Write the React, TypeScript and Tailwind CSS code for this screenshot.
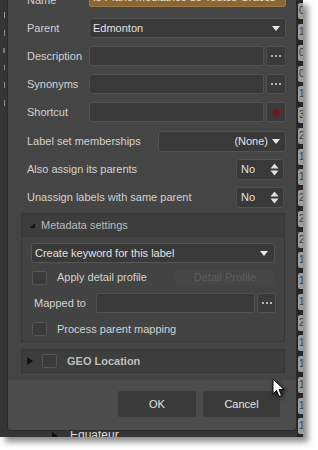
import React from "react";

const font = { fontFamily: '"Liberation Sans", Arial, sans-serif' };

const counts = [0, 1, 0, 0, 1, 3, 2, 1, 1, 2, 2, 2, 1, 1, 1, 2, 1, 1, 1, 1, 1];

const DownArrow = () => (
  <svg width="8" height="5" viewBox="0 0 8 5">
    <path d="M0 0 H8 L4 5 Z" fill="#e8e8e8" />
  </svg>
);

const Spin = () => (
  <svg width="9" height="13" viewBox="0 0 9 13">
    <path d="M0.5 5.5 L4.5 0.5 L8.5 5.5 Z" fill="#e0e0e0" />
    <path d="M0.5 7.5 H8.5 L4.5 12.5 Z" fill="#e0e0e0" />
  </svg>
);

const Dots = () => (
  <span className="flex gap-[2px]">
    <span className="w-[2px] h-[2px] bg-[#b5b5b5]" />
    <span className="w-[2px] h-[2px] bg-[#b5b5b5]" />
    <span className="w-[2px] h-[2px] bg-[#b5b5b5]" />
  </span>
);

const Field = ({ label, children }: { label: string; children: React.ReactNode }) => (
  <div className="flex items-center h-[20px]">
    <span className="w-[62px] shrink-0 text-[11px] text-[#d2d2d2]">{label}</span>
    <div className="flex-1 flex h-full">{children}</div>
  </div>
);

const Box = () => (
  <div className="flex-1 h-full bg-[#393939] border border-[#515151] rounded-[2px]" />
);

const SideButton = ({ children }: { children: React.ReactNode }) => (
  <div className="w-[20px] ml-[2px] h-full bg-[#3a3a3a] border border-[#515151] rounded-[2px] flex items-center justify-center">
    {children}
  </div>
);

const Check = () => (
  <div className="w-[15px] h-[14px] bg-[#3b3b3b] border border-[#545454] rounded-[2px] shrink-0" />
);

const Dialog = () => (
  <div className="h-[431px] bg-[#454545] border-l border-r border-b border-[#2b2b2b] rounded-b-[4px] overflow-hidden flex flex-col">
    <div className="pl-[19px] pr-[10px] flex flex-col">
      <div className="flex items-end h-[20px] mt-[-13px]">
        <span className="w-[62px] shrink-0 text-[11px] text-[#d2d2d2] leading-[14px]">Name</span>
        <div className="flex-1 h-full bg-[#8a6634] border border-[#a07a44] rounded-[2px] overflow-hidden whitespace-nowrap text-[11px] text-[#f0e6d6] pl-[3px] leading-[18px]">
          Is Plane Médiatrice de Toutes Grâces
        </div>
      </div>
      <div className="mt-[11px] flex flex-col gap-[8px]">
        <Field label="Parent">
          <div className="flex-1 h-full bg-[#393939] border border-[#515151] rounded-[2px] flex items-center justify-between pl-[3px] pr-[5px]">
            <span className="text-[11px] text-[#e2e2e2]">Edmonton</span>
            <DownArrow />
          </div>
        </Field>
        <Field label="Description">
          <Box />
          <SideButton>
            <Dots />
          </SideButton>
        </Field>
        <Field label="Synonyms">
          <Box />
          <SideButton>
            <Dots />
          </SideButton>
        </Field>
        <Field label="Shortcut">
          <Box />
          <SideButton>
            <span className="w-[7px] h-[7px] rounded-full bg-[#6e1a1a] shadow-[0_0_3px_#7a2020]" />
          </SideButton>
        </Field>
      </div>
      <div className="mt-[9px] flex items-center h-[21px]">
        <span className="flex-1 text-[11px] text-[#d2d2d2]">Label set memberships</span>
        <div className="w-[128px] h-full bg-[#393939] border border-[#515151] rounded-[3px] flex items-center justify-end gap-[4px] pr-[5px]">
          <span className="text-[11px] text-[#e2e2e2]">(None)</span>
          <DownArrow />
        </div>
      </div>
      <div className="mt-[7px] flex items-center h-[21px]">
        <span className="flex-1 text-[11px] text-[#d2d2d2]">Also assign its parents</span>
        <div className="w-[48px] mr-[2px] h-full bg-[#393939] border border-[#515151] rounded-[3px] flex items-center justify-between pl-[4px] pr-[4px]">
          <span className="text-[11px] text-[#e2e2e2]">No</span>
          <Spin />
        </div>
      </div>
      <div className="mt-[7px] flex items-center h-[21px]">
        <span className="flex-1 text-[11px] text-[#d2d2d2]">Unassign labels with same parent</span>
        <div className="w-[48px] mr-[2px] h-full bg-[#393939] border border-[#515151] rounded-[3px] flex items-center justify-between pl-[4px] pr-[4px]">
          <span className="text-[11px] text-[#e2e2e2]">No</span>
          <Spin />
        </div>
      </div>
    </div>

    <div className="ml-[13px] mr-[11px] mt-[5px] h-[129px] border border-[#373737] bg-[#434343] flex flex-col">
      <div className="h-[23px] bg-[#3d3d3d] border-b border-[#383838] flex items-center pl-[8px] gap-[6px]">
        <svg width="5" height="5" viewBox="0 0 5 5">
          <path d="M5 0 V5 H0 Z" fill="#111" />
        </svg>
        <span className="text-[11px] text-[#bcbcbc]">Metadata settings</span>
      </div>
      <div className="pl-[9px] pr-[9px] flex flex-col">
        <div className="mt-[6px] h-[20px] bg-[#393939] border border-[#555] rounded-[3px] flex items-center justify-between pl-[3px] pr-[6px]">
          <span className="text-[11px] text-[#e2e2e2]">Create keyword for this label</span>
          <DownArrow />
        </div>
        <div className="mt-[6px] h-[17px] flex items-center">
          <div className="ml-[1px]">
            <Check />
          </div>
          <span className="ml-[10px] flex-1 text-[11px] text-[#d2d2d2]">Apply detail profile</span>
          <div className="w-[100px] h-[15px] bg-[#464646] rounded-[2px] flex items-center justify-center text-[11px] text-[#5c5c5c]">
            Detail Profile
          </div>
        </div>
        <div className="mt-[7px] h-[20px] flex items-center">
          <span className="ml-[3px] w-[62px] text-[11px] text-[#d2d2d2]">Mapped to</span>
          <div className="flex-1 h-full bg-[#393939] border border-[#515151] rounded-[2px]" />
          <div className="w-[19px] ml-[2px] mr-[-1px] h-full bg-[#3a3a3a] border border-[#515151] rounded-[2px] flex items-center justify-center">
            <Dots />
          </div>
        </div>
        <div className="mt-[9px] h-[14px] flex items-center">
          <div className="ml-[1px]">
            <Check />
          </div>
          <span className="ml-[10px] text-[11px] text-[#d2d2d2]">Process parent mapping</span>
        </div>
      </div>
    </div>

    <div className="ml-[13px] mr-[11px] mt-[7px] h-[24px] border border-[#373737] bg-[#3d3d3d] flex items-center pl-[5px]">
      <svg width="6" height="8" viewBox="0 0 6 8">
        <path d="M0 0 L6 4 L0 8 Z" fill="#111" />
      </svg>
      <div className="ml-[9px]">
        <Check />
      </div>
      <span className="ml-[10px] text-[11px] font-bold text-[#bdbdbd]">GEO Location</span>
    </div>

    <div className="mt-[7px] flex-1 bg-[#4c4c4c] flex justify-end gap-[7px] pt-[11px] pr-[16px]">
      <div className="w-[78px] h-[26px] bg-[#3a3a3a] rounded-[2px] flex items-center justify-center text-[11px] text-[#e2e2e2]">
        OK
      </div>
      <div className="w-[77px] h-[26px] bg-[#3a3a3a] rounded-[2px] flex items-center justify-center text-[11px] text-[#e2e2e2]">
        Cancel
      </div>
    </div>
  </div>
);

export default function App() {
  return (
    <div className="w-[318px] h-[450px] bg-white relative overflow-hidden" style={font}>
      <div className="w-[303px] h-[437px] flex bg-[#353535] overflow-hidden shadow-[5px_5px_6px_rgba(0,0,0,0.45)]">
        <div className="w-[7px] flex flex-col items-end pr-[2px] pt-[12px] gap-[12px]">
          <span className="w-[1px] h-[6px] bg-[#9a9a9a]" />
          <span className="w-[1px] h-[6px] bg-[#8a8a8a]" />
          <span className="w-[2px] h-[5px] bg-[#7a7a7a]" />
          <span className="w-[1px] h-[5px] bg-[#8a8a8a]" />
          <span className="w-[1px] h-[6px] bg-[#8a8a8a]" />
          <span className="w-[1px] h-[6px] bg-[#8a8a8a]" />
        </div>
        <div className="w-[290px] flex flex-col">
          <Dialog />
          <div className="h-[6px] overflow-hidden flex items-start bg-[#353535]">
            <svg className="ml-[45px] mt-[1px]" width="6" height="8" viewBox="0 0 6 8">
              <path d="M0 0 L6 4 L0 8 Z" fill="#111" />
            </svg>
            <span className="ml-[12px] mt-[-3px] text-[12px] leading-[14px] text-[#dcdcdc]">Equateur</span>
          </div>
        </div>
        <div className="w-[6px] bg-[#262626] flex flex-col pt-[1px]">
          {counts.map((c, i) => (
            <div key={i} className="h-[20.75px] flex items-center">
              <div className="h-[16px] w-full ml-[1px] bg-[#9d9d9d] rounded-l-[2px] text-[10px] leading-[16px] text-[#3a3a3a] pl-[1px] overflow-hidden">
                {c}
              </div>
            </div>
          ))}
        </div>
      </div>
      <svg
        className="absolute left-[272px] top-[378px] drop-shadow-[2px_2px_2px_rgba(0,0,0,0.6)]"
        width="13"
        height="20"
        viewBox="0 0 13 20"
      >
        <path
          d="M1 1 L1 16 L4.5 12.5 L7 18.5 L9.5 17.5 L7 11.5 L12 11.5 Z"
          fill="#fff"
          stroke="#000"
          strokeWidth="1"
          strokeLinejoin="round"
        />
      </svg>
    </div>
  );
}
